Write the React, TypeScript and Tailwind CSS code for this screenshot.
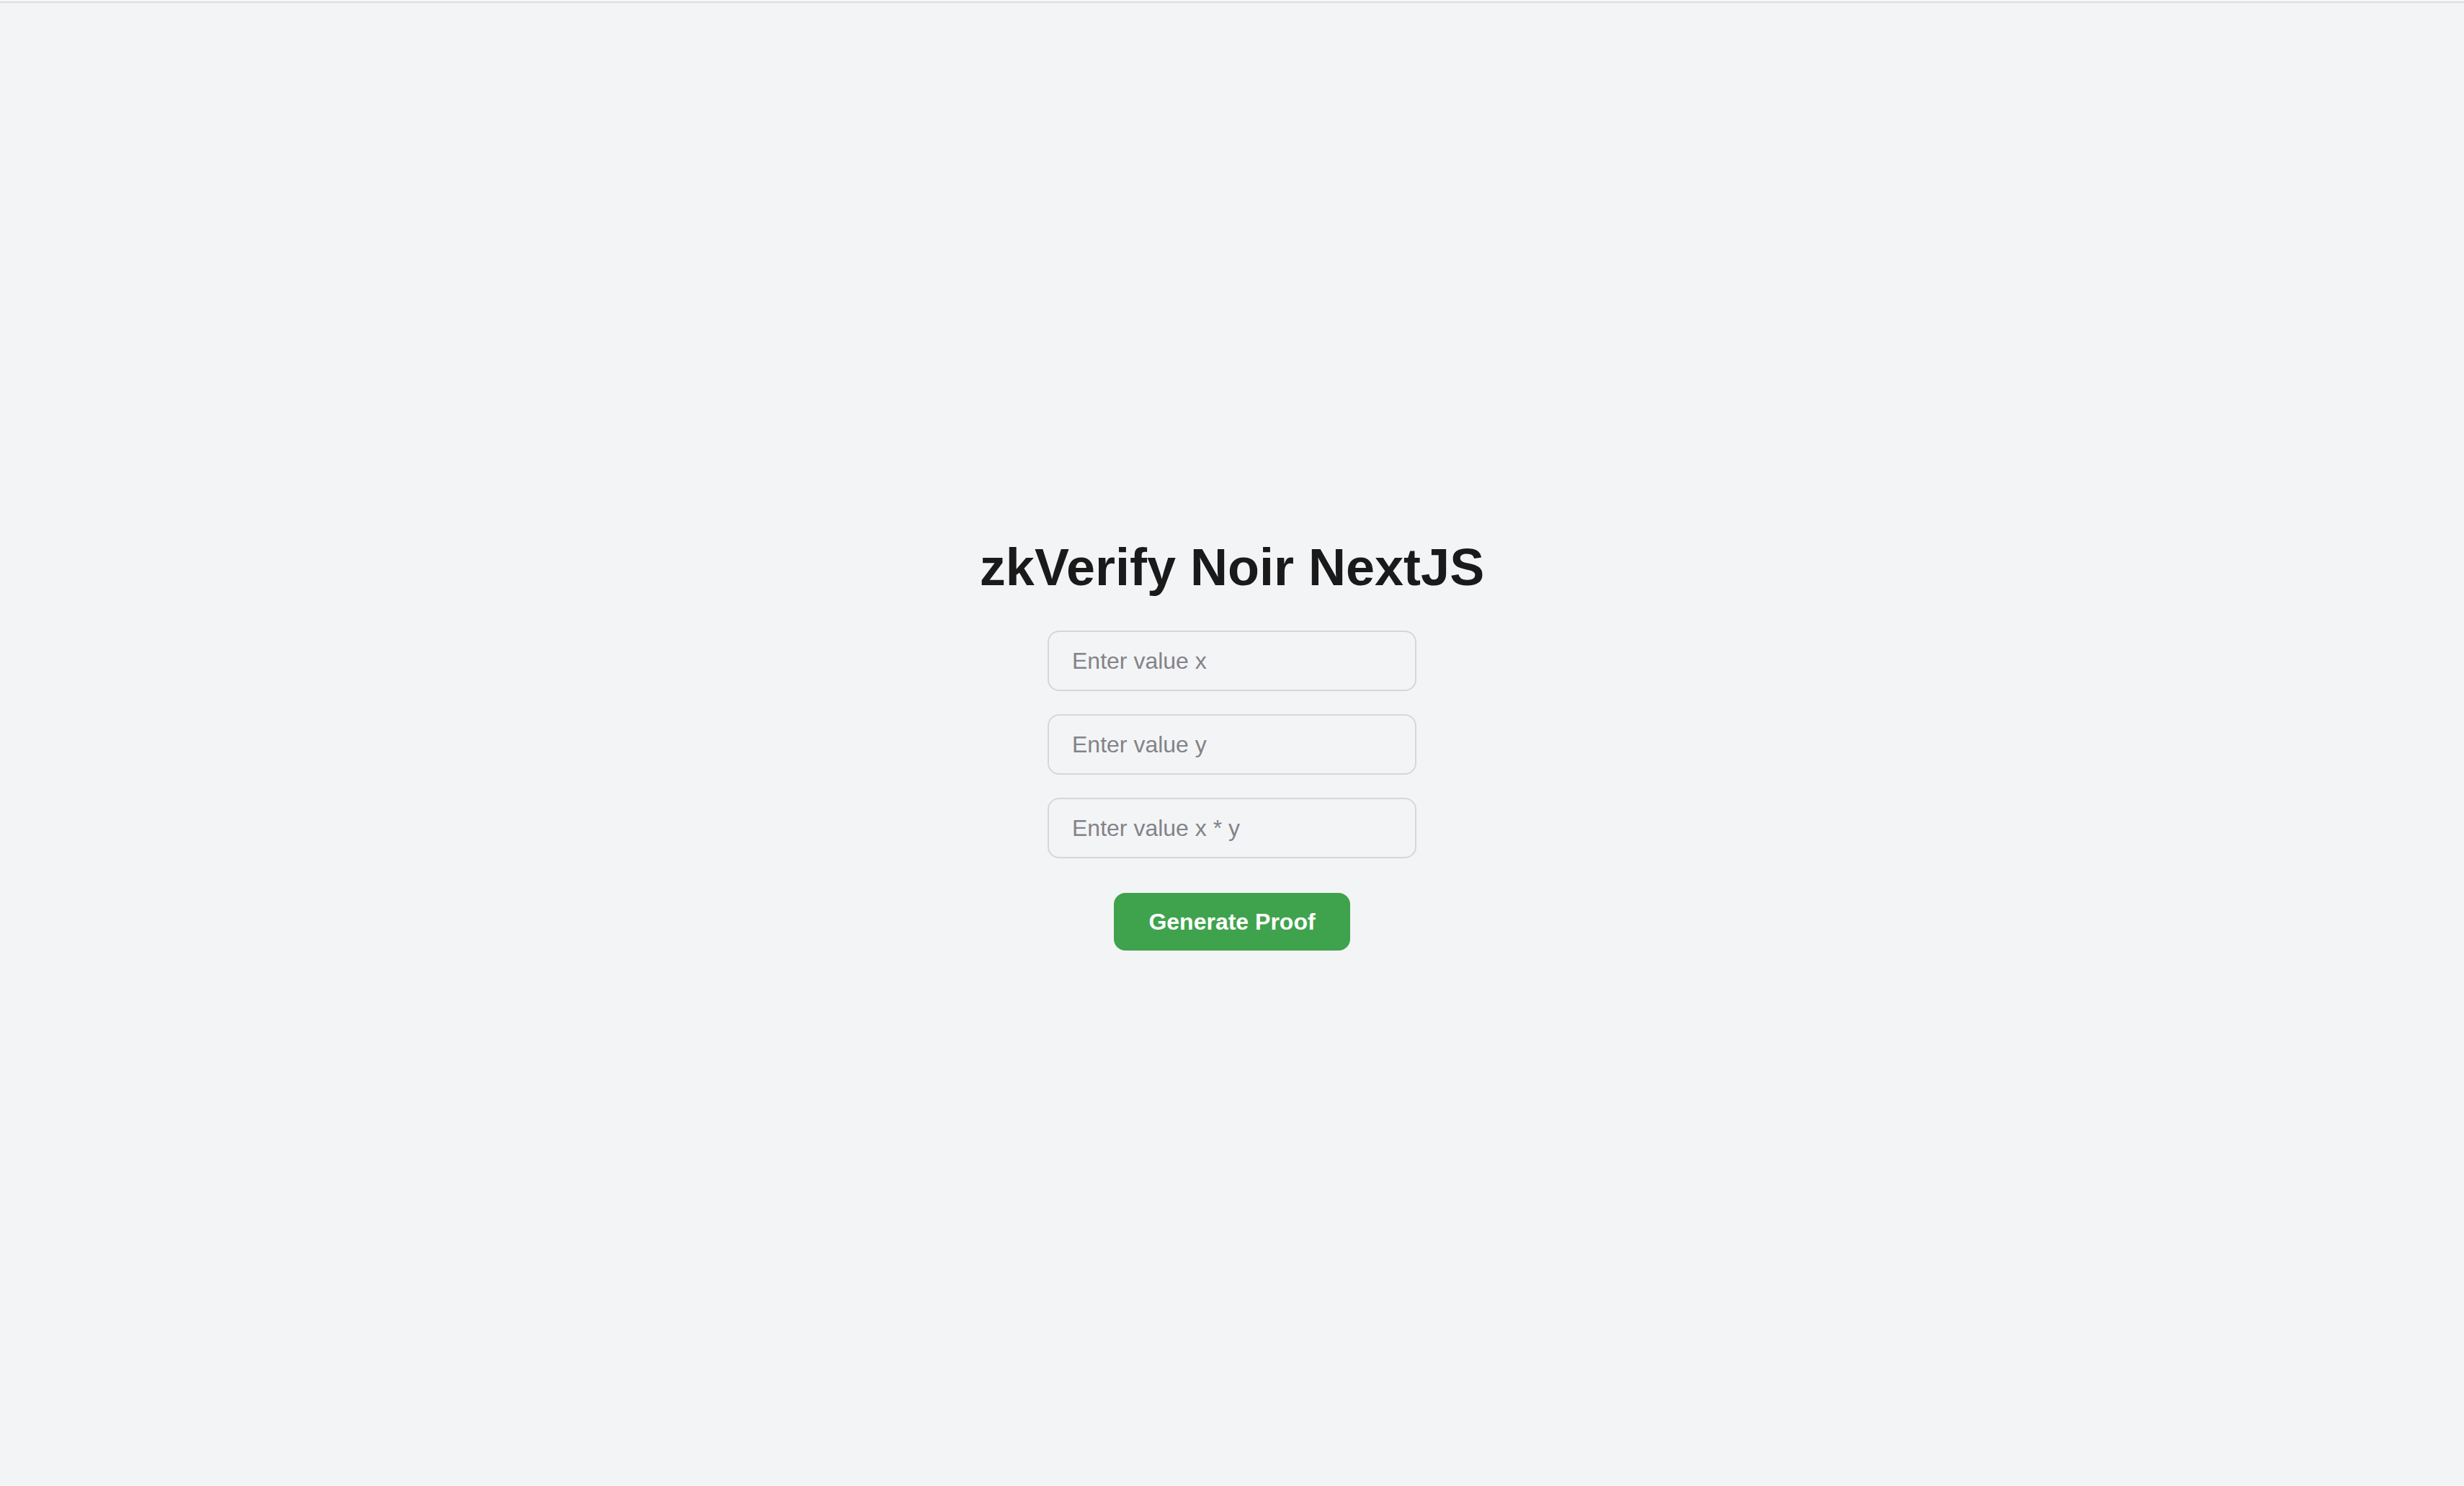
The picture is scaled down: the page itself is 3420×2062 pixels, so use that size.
import { useState } from 'react'

export default function App() {
  const [x, setX] = useState('')
  const [y, setY] = useState('')
  const [product, setProduct] = useState('')

  const inputClass =
    'mb-[32px] h-[84px] w-[512px] rounded-[16px] border-2 border-[#d6d6dc] bg-transparent px-[32px] text-[32px] text-[#1a1a1a] outline-none placeholder:text-[#838388]'

  return (
    <div className="flex min-h-screen flex-col bg-[#f3f4f6] font-['Liberation_Sans',Arial,sans-serif]">
      {/* top edge of the window */}
      <div className="h-[2px] bg-[#f7f7f9]" />
      <div className="h-[2px] bg-[#dcdce3]" />

      <main className="flex flex-1 flex-col items-center justify-center">
        <h1 className="mb-[48px] text-[72px] font-bold leading-[80px] text-[#1a1a1a]">zkVerify Noir NextJS</h1>

        <input
          type="text"
          value={x}
          onChange={(e) => setX(e.target.value)}
          placeholder="Enter value x"
          className={inputClass}
        />
        <input
          type="text"
          value={y}
          onChange={(e) => setY(e.target.value)}
          placeholder="Enter value y"
          className={inputClass}
        />
        <input
          type="text"
          value={product}
          onChange={(e) => setProduct(e.target.value)}
          placeholder="Enter value x * y"
          className={inputClass}
        />

        <button
          type="button"
          className="mt-[16px] h-[80px] rounded-[16px] bg-[#3fa34d] px-[48px] text-[32px] font-bold leading-[48px] text-white"
        >
          Generate Proof
        </button>
      </main>
    </div>
  )
}
